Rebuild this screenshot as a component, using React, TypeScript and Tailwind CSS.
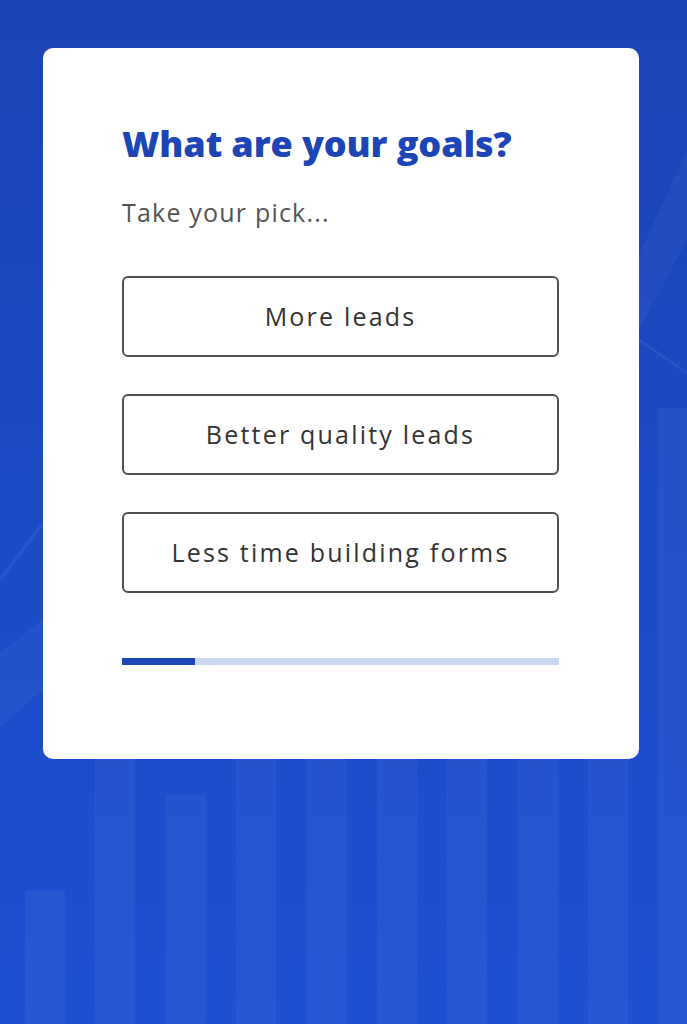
import React from "react";

const bars = [
  { x: 25, top: 891 },
  { x: 95, top: 700 },
  { x: 166, top: 795 },
  { x: 236, top: 620 },
  { x: 307, top: 560 },
  { x: 377, top: 640 },
  { x: 447, top: 520 },
  { x: 518, top: 470 },
  { x: 588, top: 520 },
  { x: 658, top: 408 },
];

function Background() {
  return (
    <svg
      className="absolute inset-0 w-full h-full pointer-events-none"
      viewBox="0 0 687 1024"
      preserveAspectRatio="none"
    >
      <defs>
        <linearGradient id="bg" x1="0" y1="0" x2="0" y2="1">
          <stop offset="0" stopColor="#1c44b3" />
          <stop offset="0.5" stopColor="#1d4bc6" />
          <stop offset="1" stopColor="#1e4fd1" />
        </linearGradient>
      </defs>
      <rect x="0" y="0" width="687" height="1024" fill="url(#bg)" />
      <polygon
        points="0,653 43,620 300,440 639,255 687,150 687,240 639,330 300,520 43,690 0,727"
        fill="#ffffff"
        fillOpacity="0.035"
      />
      <polyline
        points="0,580 43,523 300,380 639,340 687,373"
        fill="none"
        stroke="#ffffff"
        strokeOpacity="0.06"
        strokeWidth="3"
      />
      {bars.map((b, i) => (
        <rect
          key={i}
          x={b.x}
          y={b.top}
          width="40"
          height={1024 - b.top}
          fill="#ffffff"
          fillOpacity="0.045"
        />
      ))}
    </svg>
  );
}

const options = ["More leads", "Better quality leads", "Less time building forms"];

export default function App() {
  return (
    <div className="relative w-full min-h-screen h-[1024px] overflow-hidden bg-[#1d4bc6]">
      <Background />
      <div className="relative pt-[48px] pl-[43px]">
        <div
          className="bg-white rounded-[10px] w-[596px] h-[711px] pl-[79px] pt-[70px]"
          style={{ fontFamily: '"Open Sans", sans-serif' }}
        >
          <div className="w-[437px]">
            <h1 className="text-[36px] leading-[52px] font-extrabold text-[#1c46b6] tracking-[-0.1px]">
              What are your goals?
            </h1>
            <p className="mt-[25px] text-[25px] leading-[34px] tracking-[1.2px] text-[#555555]">
              Take your pick...
            </p>
            <div className="mt-[47px] flex flex-col gap-[37px]">
              {options.map((o) => (
                <button
                  key={o}
                  className="h-[81px] w-full rounded-[6px] border-2 border-[#505050] bg-white text-[25px] tracking-[2.2px] text-[#333333] flex items-center justify-center"
                >
                  {o}
                </button>
              ))}
            </div>
            <div className="mt-[65px] h-[7px] w-full bg-[#cbd6f1] flex">
              <div className="h-full w-[73px] bg-[#1e46b7]" />
            </div>
          </div>
        </div>
      </div>
    </div>
  );
}
